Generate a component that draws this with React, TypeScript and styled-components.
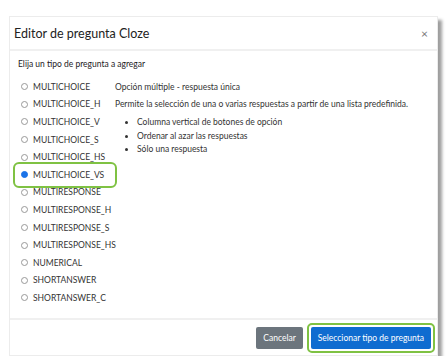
import React from "react"
import styled, { createGlobalStyle } from "styled-components"

const GlobalStyle = createGlobalStyle`
  html, body {
    margin: 0;
    background: #ffffff;
  }
  body {
    font-family: Lato, "Open Sans", sans-serif;
    color: #1d2125;
  }
`

const options = [
  "MULTICHOICE",
  "MULTICHOICE_H",
  "MULTICHOICE_V",
  "MULTICHOICE_S",
  "MULTICHOICE_HS",
  "MULTICHOICE_VS",
  "MULTIRESPONSE",
  "MULTIRESPONSE_H",
  "MULTIRESPONSE_S",
  "MULTIRESPONSE_HS",
  "NUMERICAL",
  "SHORTANSWER",
  "SHORTANSWER_C",
]

const selected = "MULTICHOICE_VS"

export default function App() {
  return <Page>
    <GlobalStyle/>
    <Dialog>
      <Header>
        <Title>Editor de pregunta Cloze</Title>
        <Close>×</Close>
      </Header>
      <Body>
        <Intro>Elija un tipo de pregunta a agregar</Intro>
        <Columns>
          <OptionList>
            {options.map(o => (
              <Option key={o} highlighted={o === selected}>
                <Radio checked={o === selected}/>
                <span>{o}</span>
              </Option>
            ))}
          </OptionList>
          <Details>
            <DetailLine>Opción múltiple - respuesta única</DetailLine>
            <DetailLine>Permite la selección de una o varias respuestas a partir de una lista predefinida.</DetailLine>
            <Bullets>
              <li>Columna vertical de botones de opción</li>
              <li>Ordenar al azar las respuestas</li>
              <li>Sólo una respuesta</li>
            </Bullets>
          </Details>
        </Columns>
      </Body>
      <Footer>
        <Button>Cancelar</Button>
        <Button primary highlighted>Seleccionar tipo de pregunta</Button>
      </Footer>
    </Dialog>
  </Page>
}

const Page = styled.div`
  padding: 16px 0 0 9px;
`

const Dialog = styled.div`
  width: 429px;
  height: 340px;
  background: #fff;
  border: 1px solid #ececec;
  box-sizing: border-box;
  box-shadow: 4px 4px 3px rgba(0, 0, 0, 0.38);
  display: flex;
  flex-direction: column;
`

const Header = styled.div`
  height: 32px;
  flex: 0 0 auto;
  display: flex;
  align-items: center;
  justify-content: space-between;
  padding: 0 9px 0 4px;
  border-bottom: 2px solid #f0f0f0;
`

const Title = styled.div`
  font-size: 12.5px;
  color: #222;
`

const Close = styled.div`
  font-size: 12px;
  color: #777;
`

const Body = styled.div`
  flex: 1 1 auto;
  padding: 7px 0 0 8px;
`

const Intro = styled.div`
  font-size: 8.5px;
  line-height: 12px;
  margin-bottom: 8px;
`

const Columns = styled.div`
  display: flex;
`

const OptionList = styled.div`
  width: 97px;
  display: flex;
  flex-direction: column;
`

const Option = styled.div<{ highlighted?: boolean }>`
  position: relative;
  display: flex;
  align-items: center;
  height: 17.6px;
  font-size: 8.5px;
  color: #333;
  padding-left: 3px;

  ${p => p.highlighted && `
    &::after {
      content: "";
      position: absolute;
      left: -5px;
      right: -2px;
      top: -4px;
      bottom: -4px;
      border: 2.5px solid #7fc243;
      border-radius: 6px;
    }
  `}
`

const Radio = styled.span<{ checked?: boolean }>`
  width: 5px;
  height: 5px;
  border-radius: 50%;
  border: 1px solid #999;
  margin-right: 5px;
  flex: 0 0 auto;
  ${p => p.checked && `
    background: #1a73e8;
    border-color: #1a73e8;
  `}
`

const Details = styled.div`
  font-size: 8.5px;
  color: #333;
  padding-top: 3px;
`

const DetailLine = styled.div`
  line-height: 12px;
  margin-bottom: 5px;
`

const Bullets = styled.ul`
  margin: 6px 0 0;
  padding-left: 22px;
  line-height: 13.5px;
`

const Footer = styled.div`
  height: 37px;
  flex: 0 0 auto;
  border-top: 2px solid #f0f0f0;
  box-sizing: border-box;
  display: flex;
  align-items: center;
  justify-content: flex-end;
  gap: 8px;
  padding: 0 6px 0 0;
`

const Button = styled.div<{ primary?: boolean; highlighted?: boolean }>`
  position: relative;
  height: 22px;
  display: flex;
  align-items: center;
  padding: 0 7px;
  font-size: 8.5px;
  color: #fff;
  border-radius: 2px;
  background: ${p => p.primary ? "#0f6cd0" : "#6c757d"};

  ${p => p.highlighted && `
    &::after {
      content: "";
      position: absolute;
      inset: -4px;
      border: 2.5px solid #7fc243;
      border-radius: 5px;
    }
  `}
`
